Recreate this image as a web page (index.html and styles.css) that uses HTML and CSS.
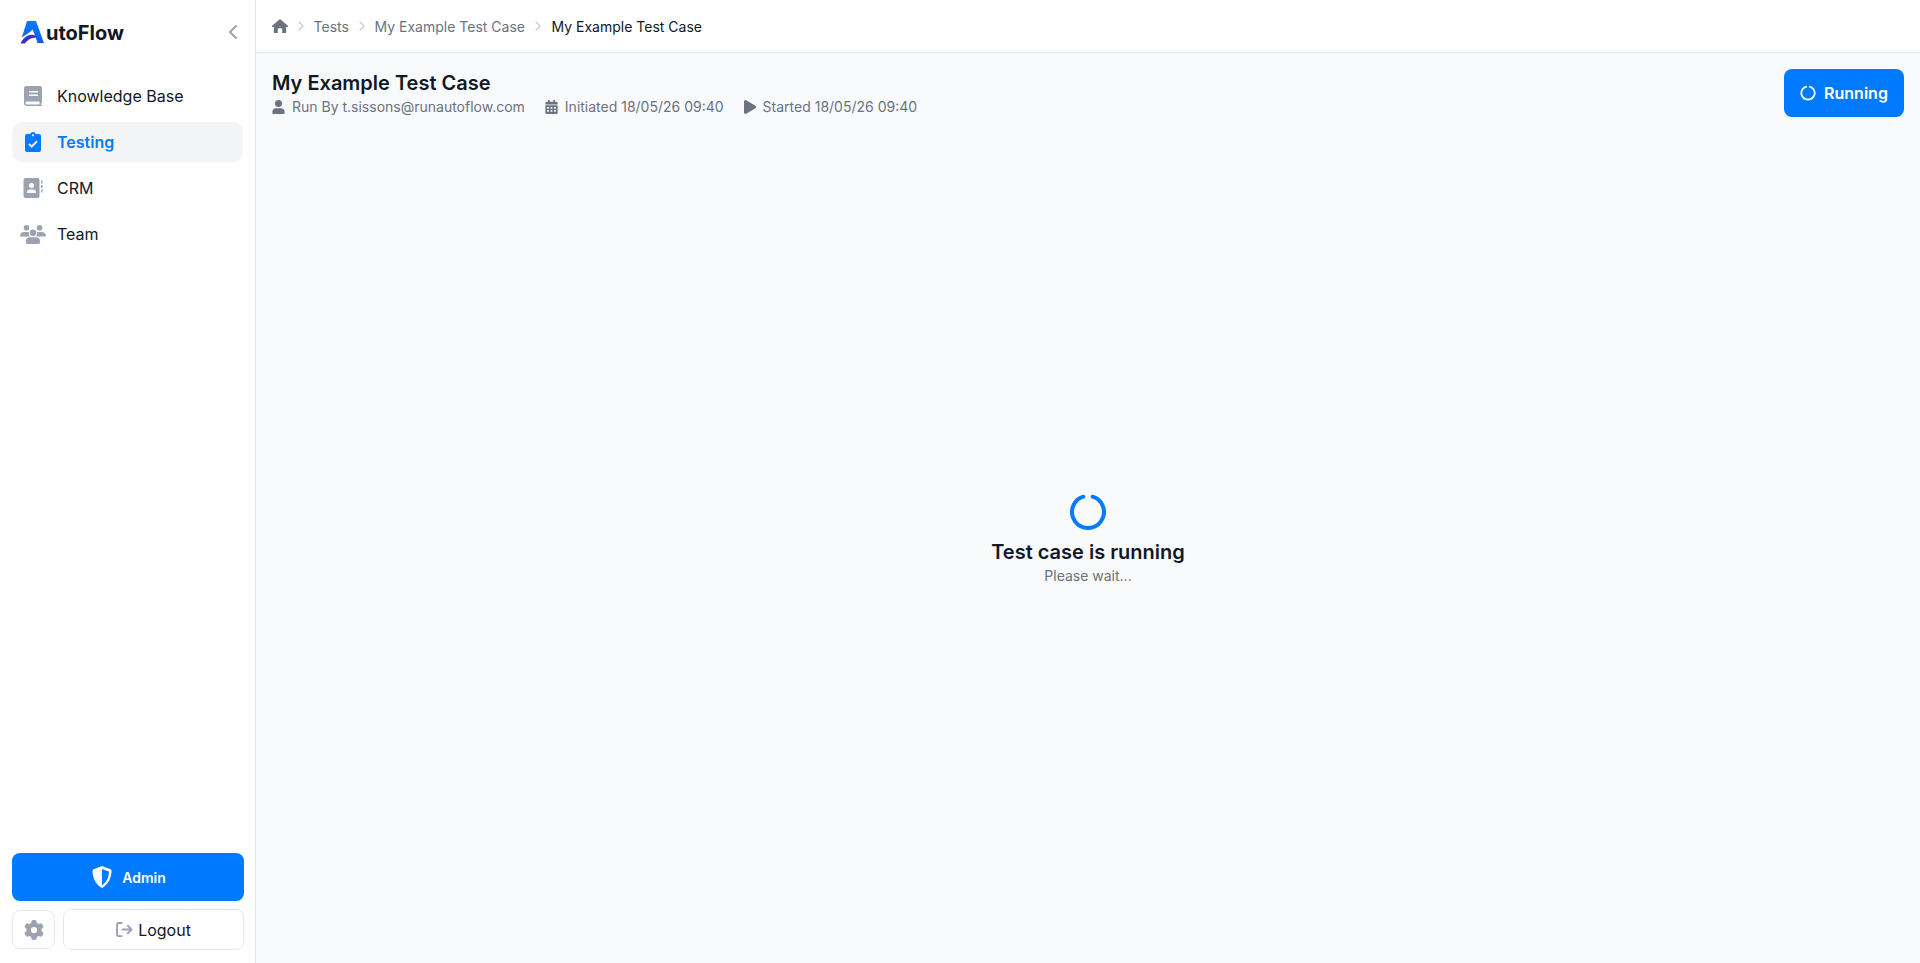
FILE: index.html
```html
<!DOCTYPE html>
<html>
<head>
  <meta charset="UTF-8">
  <title>AutoFlow - My Example Test Case</title>
  <link rel="stylesheet" href="styles.css">
</head>
<body>
  <aside class="sidebar">
    <div class="brand">
      <div class="logo">
        <svg class="logo-mark" viewBox="0 0 24 24">
          <defs>
            <linearGradient id="logoBlue" x1="0" y1="0" x2="0" y2="1">
              <stop offset="0" stop-color="#0a7bff"/>
              <stop offset="1" stop-color="#0f5fe8"/>
            </linearGradient>
          </defs>
          <path fill="url(#logoBlue)" d="M7 1h9l8 22h-6.500C16 18.500 14.500 13.500 12.500 9.500 9.500 13 5 15 1.800 17.500Z"/>
          <path fill="#3f2fc4" d="M.5 23.500C3 18 7.500 14.800 12 14.800c2.400 0 4.300 1 5.200 2.800C13 16.800 8 19 4.800 23.500Z"/>
        </svg>
        <span class="logo-text">utoFlow</span>
      </div>
      <svg class="collapse" viewBox="0 0 12 20"><path d="M8 4 2 10 8 16"/></svg>
    </div>

    <nav class="nav">
      <a class="nav-item">
        <svg class="nav-icon" viewBox="0 0 20 20"><path fill-rule="evenodd" d="M3 0h14a2 2 0 0 1 2 2v15l-1 .5V19h1v1H4a3 3 0 0 1-3-3V2a2 2 0 0 1 2-2Zm3 5v1.500h9V5Zm0 3.500V10h9V8.500ZM4 15.500a1.500 1.500 0 0 0 0 3h12.500v-3Z"/></svg>
        <span>Knowledge Base</span>
      </a>
      <a class="nav-item active">
        <svg class="nav-icon" viewBox="0 0 20 20"><path fill-rule="evenodd" d="M10 0a3 3 0 0 1 2.800 2H16a2 2 0 0 1 2 2v14a2 2 0 0 1-2 2H4a2 2 0 0 1-2-2V4a2 2 0 0 1 2-2h3.200A3 3 0 0 1 10 0Zm0 2.200a1.100 1.100 0 1 0 0 2.200 1.100 1.100 0 0 0 0-2.200Zm4.700 7.700-1.300-1.300-4.700 4.700-2.100-2.100-1.300 1.300 3.400 3.400Z"/></svg>
        <span>Testing</span>
      </a>
      <a class="nav-item">
        <svg class="nav-icon" viewBox="0 0 20 20"><path fill-rule="evenodd" d="M2.500 0h12a2 2 0 0 1 2 2v16a2 2 0 0 1-2 2h-12a2 2 0 0 1-2-2V2a2 2 0 0 1 2-2Zm6 5a2.500 2.500 0 1 0 0 5 2.500 2.500 0 0 0 0-5Zm-1.500 6.500A3 3 0 0 0 4 14.500v.500h9v-.500a3 3 0 0 0-3-3ZM18 2.500h1.500v3H18Zm0 4.500h1.500v3H18Zm0 4.500h1.500v3H18Z"/></svg>
        <span>CRM</span>
      </a>
      <a class="nav-item">
        <svg class="nav-icon wide" viewBox="0 0 26 20"><path d="M6.500 1a2.800 2.800 0 1 1 0 5.600 2.800 2.800 0 0 1 0-5.600Zm13 0a2.800 2.800 0 1 1 0 5.600 2.800 2.800 0 0 1 0-5.600ZM13 5.500a3.300 3.300 0 1 1 0 6.600 3.300 3.300 0 0 1 0-6.600ZM3.800 8h4.300c.3 0 .6 0 .9.100A5 5 0 0 0 10 12.500H0A4.500 4.500 0 0 1 3.800 8Zm18.400 0A4.500 4.500 0 0 1 26 12.500H16A5 5 0 0 0 17 8.100c.3-.1.600-.1.900-.1ZM10 13.300h6a4 4 0 0 1 4 4V18.500a1.500 1.500 0 0 1-1.500 1.500h-11A1.500 1.500 0 0 1 6 18.500v-1.200a4 4 0 0 1 4-4Z"/></svg>
        <span>Team</span>
      </a>
    </nav>

    <div class="sidebar-footer">
      <button class="admin-btn">
        <svg class="admin-icon" viewBox="0 0 20 22"><path fill-rule="evenodd" d="M10 0 18.500 3.300c.6.2 1 .8 1 1.400 0 6-2.500 13.500-9.500 17.300C3 18.200.5 10.700.5 4.700c0-.6.4-1.200 1-1.400ZM10 2.900v16.400c4.800-3 7-8.800 7-13.800Z"/></svg>
        <span>Admin</span>
      </button>
      <div class="footer-row">
        <button class="settings-btn">
          <svg class="gear" viewBox="0 0 512 512"><path d="M495.900 166.600c3.200 8.700 .5 18.400-6.400 24.600l-43.300 39.400c1.100 8.300 1.700 16.800 1.700 25.400s-.6 17.100-1.700 25.400l43.300 39.400c6.900 6.200 9.600 15.900 6.400 24.600c-4.400 11.900-9.700 23.300-15.800 34.300l-4.700 8.100c-6.600 11-14 21.400-22.100 31.200c-5.900 7.200-15.700 9.600-24.500 6.800l-55.700-17.700c-13.400 10.300-28.200 18.900-44 25.400l-12.500 57.100c-2 9.100-9 16.300-18.200 17.800c-13.800 2.300-28 3.500-42.500 3.500s-28.700-1.200-42.500-3.500c-9.200-1.500-16.200-8.700-18.200-17.800l-12.500-57.100c-15.800-6.500-30.600-15.100-44-25.400L83.100 425.900c-8.800 2.800-18.600 .3-24.500-6.800c-8.100-9.800-15.500-20.200-22.100-31.200l-4.700-8.100c-6.100-11-11.400-22.400-15.800-34.300c-3.200-8.700-.5-18.400 6.400-24.600l43.300-39.400C64.600 273.100 64 264.600 64 256s.6-17.100 1.700-25.400L22.400 191.200c-6.900-6.200-9.600-15.900-6.400-24.600c4.400-11.900 9.700-23.300 15.800-34.300l4.700-8.100c6.600-11 14-21.400 22.100-31.200c5.900-7.200 15.700-9.600 24.500-6.800l55.700 17.700c13.400-10.300 28.200-18.900 44-25.400l12.500-57.100c2-9.100 9-16.300 18.200-17.800C227.300 1.200 241.500 0 256 0s28.700 1.200 42.500 3.500c9.200 1.500 16.200 8.700 18.200 17.800l12.500 57.100c15.800 6.500 30.600 15.100 44 25.400l55.700-17.700c8.800-2.800 18.600-.3 24.500 6.800c8.100 9.800 15.500 20.200 22.100 31.200l4.700 8.100c6.100 11 11.400 22.400 15.800 34.300zM256 336a80 80 0 1 0 0-160 80 80 0 1 0 0 160z"/></svg>
        </button>
        <button class="logout-btn">
          <svg class="logout-icon" viewBox="0 0 18 16"><path d="M6 1H3a2 2 0 0 0-2 2v10a2 2 0 0 0 2 2h3M7 8h9M12.500 4 16.500 8l-4 4"/></svg>
          <span>Logout</span>
        </button>
      </div>
    </div>
  </aside>

  <main class="main">
    <header class="topbar">
      <svg class="home-icon" viewBox="0 0 18 16"><path d="M9 0 18 7.800a.8.8 0 0 1-.5 1.400H16V15a1 1 0 0 1-1 1h-3.500v-4.500a1 1 0 0 0-1-1h-3a1 1 0 0 0-1 1V16H3a1 1 0 0 1-1-1V9.200H.5A.8.800 0 0 1 0 7.800Z"/></svg>
      <svg class="crumb-sep" viewBox="0 0 8 12"><path d="M2 2 6 6 2 10"/></svg>
      <span class="crumb">Tests</span>
      <svg class="crumb-sep" viewBox="0 0 8 12"><path d="M2 2 6 6 2 10"/></svg>
      <span class="crumb">My Example Test Case</span>
      <svg class="crumb-sep" viewBox="0 0 8 12"><path d="M2 2 6 6 2 10"/></svg>
      <span class="crumb current">My Example Test Case</span>
    </header>

    <section class="page-head">
      <div>
        <h1 class="page-title">My Example Test Case</h1>
        <div class="meta">
          <span class="meta-item">
            <svg class="meta-icon" viewBox="0 0 14 16"><path d="M7 0a4 4 0 1 1 0 8 4 4 0 0 1 0-8ZM4.500 9.500h5A4.500 4.500 0 0 1 14 14v.8a1.200 1.200 0 0 1-1.200 1.200H1.200A1.200 1.200 0 0 1 0 14.800V14a4.500 4.500 0 0 1 4.500-4.500Z"/></svg>
            Run By t.sissons@runautoflow.com
          </span>
          <span class="meta-item">
            <svg class="meta-icon" viewBox="0 0 14 16"><path fill-rule="evenodd" d="M3 0h2v2h4V0h2v2h1.500A1.500 1.500 0 0 1 14 3.500V5H0V3.500A1.500 1.500 0 0 1 1.500 2H3ZM0 6h14v8.500a1.500 1.500 0 0 1-1.500 1.500h-11A1.500 1.500 0 0 1 0 14.500Zm2 2v2h2V8Zm4 0v2h2V8Zm4 0v2h2V8Zm-8 3.500v2h2v-2Zm4 0v2h2v-2Zm4 0v2h2v-2Z"/></svg>
            Initiated 18/05/26 09:40
          </span>
          <span class="meta-item">
            <svg class="meta-icon play" viewBox="0 0 12 14"><path d="M0 1.500C0 .4 1.100-.3 2.100.2l9 5.300a1.700 1.700 0 0 1 0 3l-9 5.300C1.100 14.300 0 13.600 0 12.500Z"/></svg>
            Started 18/05/26 09:40
          </span>
        </div>
      </div>
      <button class="status-btn">
        <svg class="status-spin" viewBox="0 0 18 18"><path d="M10.900 1.800A7.500 7.500 0 1 1 7.100 1.800"/></svg>
        <span>Running</span>
      </button>
    </section>

    <section class="loader">
      <svg class="loader-spin" viewBox="0 0 36 36"><path d="M22.700 2.700A16 16 0 1 1 13.300 2.700"/></svg>
      <h2 class="loader-title">Test case is running</h2>
      <p class="loader-sub">Please wait...</p>
    </section>
  </main>
</body>
</html>
```

FILE: styles.css
```css
* {
  box-sizing: border-box;
}
body {
  margin: 0;
  height: 100vh;
  display: flex;
  overflow: hidden;
  font-family: Inter, "Liberation Sans", sans-serif;
  color: #111827;
  background-color: #f9fafb;
}
button {
  font-family: inherit;
  cursor: pointer;
}

/* Sidebar */
.sidebar {
  width: 256px;
  flex-shrink: 0;
  display: flex;
  flex-direction: column;
  background-color: white;
  border-right: 1px solid #e5e7eb;
  padding: 0 12px 13px;
}
.brand {
  height: 64px;
  display: flex;
  align-items: center;
  justify-content: space-between;
  padding: 0 3px 0 8px;
}
.logo {
  display: flex;
  align-items: center;
}
.logo-mark {
  width: 24px;
  height: 24px;
  margin-right: 2px;
}
.logo-text {
  font-size: 20px;
  font-weight: 700;
  color: #111827;
  margin-top: 1px;
}
.collapse {
  width: 12px;
  height: 20px;
  fill: none;
  stroke: #9ca3af;
  stroke-width: 2;
  stroke-linecap: round;
  stroke-linejoin: round;
}
.nav {
  display: flex;
  flex-direction: column;
  gap: 6px;
  margin-top: 12px;
}
.nav-item {
  height: 40px;
  display: flex;
  align-items: center;
  padding-left: 11px;
  border-radius: 10px;
  font-size: 16px;
  color: #111827;
}
.nav-item span {
  margin-left: 14px;
}
.nav-icon {
  width: 20px;
  height: 20px;
  fill: #9ca3af;
  flex-shrink: 0;
}
.nav-icon.wide {
  width: 26px;
  margin-left: -3px;
  margin-right: -3px;
}
.nav-item.active {
  background-color: #f3f4f6;
  color: #007bff;
  font-weight: 600;
}
.nav-item.active .nav-icon {
  fill: #007bff;
}
.sidebar-footer {
  margin-top: auto;
  margin-right: -1px;
  display: flex;
  flex-direction: column;
  gap: 8px;
}
.admin-btn {
  height: 48px;
  display: flex;
  align-items: center;
  justify-content: center;
  gap: 10px;
  padding: 0 0 0 2px;
  border: none;
  border-radius: 8px;
  background-color: #007bff;
  color: white;
  font-size: 14px;
  font-weight: 600;
}
.admin-icon {
  width: 20px;
  height: 22px;
  fill: white;
}
.footer-row {
  display: flex;
  align-items: center;
  gap: 8px;
}
.settings-btn {
  width: 43px;
  height: 39px;
  display: flex;
  align-items: center;
  justify-content: center;
  padding: 0;
  background-color: white;
  border: 1px solid #e5e7eb;
  border-radius: 8px;
}
.gear {
  width: 20px;
  height: 20px;
  fill: #9ca3af;
}
.logout-btn {
  flex: 1;
  height: 41px;
  display: flex;
  align-items: center;
  justify-content: center;
  gap: 5px;
  background-color: white;
  border: 1px solid #e5e7eb;
  border-radius: 8px;
  font-size: 16px;
  color: #111827;
}
.logout-icon {
  width: 17px;
  height: 15px;
  fill: none;
  stroke: #9ca3af;
  stroke-width: 2;
  stroke-linecap: round;
  stroke-linejoin: round;
}

/* Main area */
.main {
  flex: 1;
  display: flex;
  flex-direction: column;
  min-width: 0;
}
.topbar {
  height: 53px;
  flex-shrink: 0;
  display: flex;
  align-items: center;
  padding-left: 16px;
  background-color: white;
  border-bottom: 1px solid #e5e7eb;
  font-size: 14px;
}
.home-icon {
  width: 16px;
  height: 14px;
  fill: #6b7280;
}
.crumb-sep {
  width: 8px;
  height: 12px;
  margin: 0 8.8px;
  fill: none;
  stroke: #c4c8cf;
  stroke-width: 1.2;
  stroke-linecap: round;
  stroke-linejoin: round;
}
.crumb {
  color: #6b7280;
}
.crumb.current {
  margin-left: 1px;
  color: #111827;
}
.page-head {
  display: flex;
  justify-content: space-between;
  align-items: flex-start;
  padding: 16px 16px 0;
}
.page-title {
  margin: 0;
  font-size: 20px;
  line-height: 28px;
  font-weight: 600;
  color: #111827;
}
.meta {
  display: flex;
  gap: 20px;
  font-size: 14px;
  line-height: 20px;
  color: #6b7280;
}
.meta-item {
  display: flex;
  align-items: center;
  gap: 7px;
}
.meta-icon {
  width: 13px;
  height: 14px;
  fill: #6b7280;
}
.meta-icon.play {
  width: 12px;
}
.status-btn {
  width: 120px;
  height: 48px;
  display: flex;
  align-items: center;
  justify-content: center;
  gap: 8px;
  border: none;
  border-radius: 8px;
  background-color: #007bff;
  color: white;
  font-size: 16px;
  font-weight: 600;
}
.status-spin {
  width: 16px;
  height: 16px;
  fill: none;
  stroke: white;
  stroke-width: 2;
  stroke-linecap: round;
}
.loader {
  flex: 1;
  display: flex;
  flex-direction: column;
  align-items: center;
  justify-content: center;
}
.loader-spin {
  width: 36px;
  height: 36px;
  fill: none;
  stroke: #007bff;
  stroke-width: 4;
  stroke-linecap: round;
}
.loader-title {
  margin: 8px 0 0;
  font-size: 20px;
  line-height: 28px;
  font-weight: 600;
  color: #111827;
}
.loader-sub {
  margin: 0;
  font-size: 14px;
  line-height: 20px;
  color: #6b7280;
}
```
